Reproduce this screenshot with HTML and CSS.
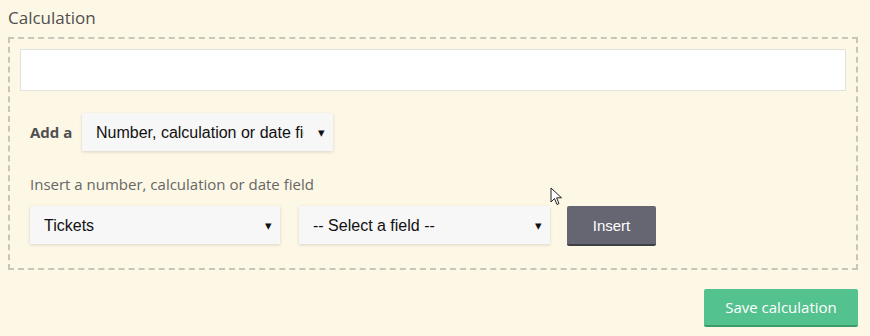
FILE: index.html
```html
<!DOCTYPE html>
<html lang="en">
  <head>
    <title>Calculation</title>
    <meta charset="utf-8">
    <link rel="stylesheet" href="styles.css">
  </head>
  <body>

  <div class="field-label">Calculation</div>

  <div class="calc-box">
    <input class="calc-input" type="text">

    <div class="add-row">
      <span class="add-label">Add a</span>
      <div class="select-wrap">
        <select class="select">
          <option>Number, calculation or date field</option>
        </select>
        <span class="arrow">&#9662;</span>
      </div>
    </div>

    <div class="insert-label">Insert a number, calculation or date field</div>

    <div class="insert-row">
      <div class="select-wrap first">
        <select class="select">
          <option>Tickets</option>
        </select>
        <span class="arrow">&#9662;</span>
      </div>
      <div class="select-wrap">
        <select class="select">
          <option>-- Select a field --</option>
        </select>
        <span class="arrow">&#9662;</span>
      </div>
      <button class="btn-insert">Insert</button>
    </div>
  </div>

  <div class="footer">
    <button class="btn-save">Save calculation</button>
  </div>

  <svg class="cursor" width="14" height="20" viewBox="0 0 14 20">
    <path d="M1 1 L1 15 L4.5 11.5 L7 17.5 L9 16.6 L6.6 10.8 L11.5 10.8 Z" fill="#fff" stroke="#222" stroke-width="1"/>
  </svg>

  </body>
</html>
```

FILE: styles.css
```css
html {
  height: 100%;
}
body {
  margin: 0;
  padding: 7px 12px 0 8px;
  background: #fdf8e5;
  color: #4f4f4f;
  font-family: "Open Sans", sans-serif;
  font-size: 14px;
  height: 100%;
  box-sizing: border-box;
  position: relative;
}

.field-label {
  font-size: 17px;
  line-height: 22px;
  color: #4f4f4f;
  margin-bottom: 8px;
}

.calc-box {
  border: 2px dashed #c9c5b9;
  padding: 10px 10px 22px 10px;
}

.calc-input {
  display: block;
  width: 100%;
  box-sizing: border-box;
  height: 42px;
  background: #fff;
  border: 1px solid #e2e2dc;
  margin: 0;
}

.add-row {
  display: flex;
  align-items: center;
  margin: 22px 0 0 10px;
}

.add-label {
  font-weight: bold;
  font-size: 15px;
  color: #4f4f4f;
  width: 52px;
}

.select-wrap {
  position: relative;
  width: 251px;
  height: 38px;
}

.select-wrap.first {
  width: 250px;
  margin-right: 2px;
}

.select {
  -webkit-appearance: none;
  appearance: none;
  width: 100%;
  height: 100%;
  border: none;
  background: #f7f7f7;
  box-shadow: 0 1px 3px rgba(0,0,0,0.15);
  font-family: "Liberation Sans", Arial, sans-serif;
  font-size: 16px;
  color: #111;
  padding: 0 29px 0 14px;
  outline: none;
}

.arrow {
  position: absolute;
  right: 8px;
  top: 10px;
  font-size: 13px;
  color: #111;
  pointer-events: none;
}

.insert-label {
  margin: 23px 0 0 10px;
  font-size: 15px;
  line-height: 20px;
  color: #666;
}

.insert-row {
  display: flex;
  align-items: flex-start;
  gap: 17px;
  margin: 12px 0 0 10px;
}

.btn-insert {
  width: 89px;
  height: 40px;
  border: none;
  border-bottom: 2px solid #3f3f48;
  border-radius: 2px;
  background: #666672;
  color: #fff;
  font-family: "Liberation Sans", Arial, sans-serif;
  font-size: 15px;
}

.footer {
  display: flex;
  justify-content: flex-end;
  margin-top: 19px;
}

.btn-save {
  width: 154px;
  height: 38px;
  border: none;
  border-bottom: 2px solid #3d9c6c;
  border-radius: 2px;
  background: #54c28f;
  color: #fff;
  font-family: "Open Sans", sans-serif;
  font-size: 15px;
}

.cursor {
  position: absolute;
  left: 550px;
  top: 187px;
}
```
